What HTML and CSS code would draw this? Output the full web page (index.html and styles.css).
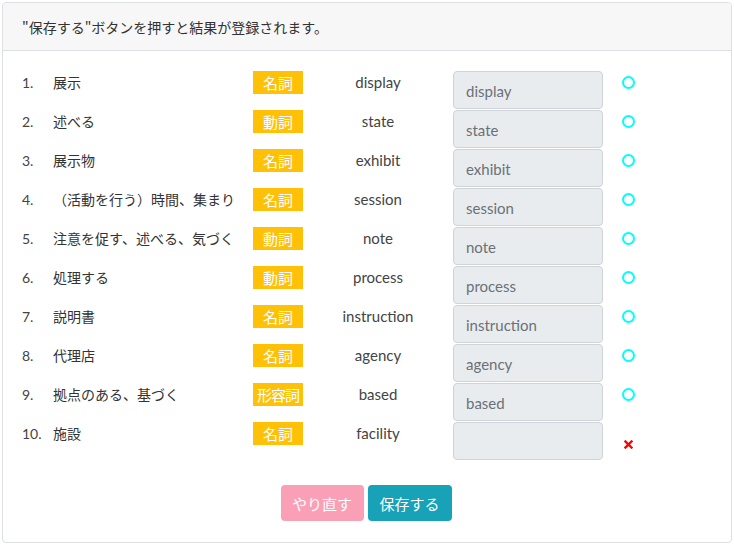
FILE: index.html
```html
<!DOCTYPE html>
<html lang="ja">
<head>
<meta charset="utf-8">
<link rel="stylesheet" href="styles.css">
</head>
<body>
<div class="card">
  <div class="card-header">"保存する"ボタンを押すと結果が登録されます。</div>
  <div class="card-body">
    <div class="rows">
      <div class="row"><span class="num">1.</span><span class="ja">展示</span><span class="badge">名詞</span><span class="en">display</span><input class="field" value="display" readonly><span class="mark"><span class="ring"></span></span></div>
      <div class="row"><span class="num">2.</span><span class="ja">述べる</span><span class="badge">動詞</span><span class="en">state</span><input class="field" value="state" readonly><span class="mark"><span class="ring"></span></span></div>
      <div class="row"><span class="num">3.</span><span class="ja">展示物</span><span class="badge">名詞</span><span class="en">exhibit</span><input class="field" value="exhibit" readonly><span class="mark"><span class="ring"></span></span></div>
      <div class="row"><span class="num">4.</span><span class="ja">（活動を行う）時間、集まり</span><span class="badge">名詞</span><span class="en">session</span><input class="field" value="session" readonly><span class="mark"><span class="ring"></span></span></div>
      <div class="row"><span class="num">5.</span><span class="ja">注意を促す、述べる、気づく</span><span class="badge">動詞</span><span class="en">note</span><input class="field" value="note" readonly><span class="mark"><span class="ring"></span></span></div>
      <div class="row"><span class="num">6.</span><span class="ja">処理する</span><span class="badge">動詞</span><span class="en">process</span><input class="field" value="process" readonly><span class="mark"><span class="ring"></span></span></div>
      <div class="row"><span class="num">7.</span><span class="ja">説明書</span><span class="badge">名詞</span><span class="en">instruction</span><input class="field" value="instruction" readonly><span class="mark"><span class="ring"></span></span></div>
      <div class="row"><span class="num">8.</span><span class="ja">代理店</span><span class="badge">名詞</span><span class="en">agency</span><input class="field" value="agency" readonly><span class="mark"><span class="ring"></span></span></div>
      <div class="row"><span class="num">9.</span><span class="ja">拠点のある、基づく</span><span class="badge badge-narrow">形容詞</span><span class="en">based</span><input class="field" value="based" readonly><span class="mark"><span class="ring"></span></span></div>
      <div class="row"><span class="num">10.</span><span class="ja">施設</span><span class="badge">名詞</span><span class="en">facility</span><input class="field" value="" readonly><span class="mark mark-wrong"><svg width="9" height="9" viewBox="0 0 9 9"><path d="M1.5 1.5L7.5 7.5M7.5 1.5L1.5 7.5" stroke="#ff0000" stroke-width="2.4" stroke-linecap="square"/></svg></span></div>
    </div>
    <div class="actions">
      <button class="btn btn-pink">やり直す</button>
      <button class="btn btn-info">保存する</button>
    </div>
  </div>
</div>
</body>
</html>
```
FILE: styles.css
```css
html, body {
  margin: 0;
  padding: 0;
  background: #ffffff;
}
body {
  padding: 2px;
  font-family: Lato, "Noto Sans CJK JP", sans-serif;
  color: #333333;
}
.card {
  width: 730px;
  height: 541px;
  box-sizing: border-box;
  border: 1px solid #dcdfe3;
  border-radius: 4px;
  display: flex;
  flex-direction: column;
  overflow: hidden;
}
.card-header {
  height: 48px;
  box-sizing: border-box;
  background: #f7f7f7;
  border-bottom: 1px solid #dcdfe3;
  padding: 14px 0 0 19px;
  font-family: "Noto Sans CJK JP", sans-serif;
  font-size: 14px;
  line-height: 20px;
  color: #333333;
}
.card-body {
  padding: 20px 0 0 19px;
}
.rows {
  display: flex;
  flex-direction: column;
  gap: 1px;
}
.row {
  display: grid;
  grid-template-columns: 31px 200px 50px 150px 150px 50px;
  align-items: start;
  height: 38px;
}
.num {
  font-family: Lato, sans-serif;
  font-size: 14px;
  line-height: 23px;
  color: #444444;
}
.ja {
  font-family: "Noto Sans CJK JP", sans-serif;
  font-size: 14px;
  line-height: 23px;
  color: #333333;
  white-space: nowrap;
}
.badge {
  height: 23px;
  background: #ffc107;
  color: #ffffff;
  font-family: "Noto Sans CJK JP", sans-serif;
  font-size: 15px;
  line-height: 23px;
  text-align: center;
}
.badge-narrow {
  letter-spacing: -1px;
}
.en {
  font-family: Lato, sans-serif;
  font-size: 15px;
  line-height: 23px;
  text-align: center;
  color: #444444;
}
.field {
  width: 150px;
  height: 38px;
  box-sizing: border-box;
  margin: 0;
  border: 1px solid #cfd4da;
  border-radius: 4px;
  background: #e9ecef;
  padding: 2px 12px 0 12px;
  font-family: Lato, sans-serif;
  font-size: 15px;
  color: #6b7177;
  outline: none;
}
.mark {
  display: flex;
  justify-content: center;
  align-items: center;
  height: 23px;
}
.ring {
  width: 9px;
  height: 9px;
  border: 2px solid #00ffff;
  border-radius: 50%;
}
.mark-wrong {
  margin-top: 11px;
}
.actions {
  display: flex;
  justify-content: center;
  gap: 4px;
  margin-top: 25px;
  padding-right: 21px;
}
.btn {
  height: 36px;
  border: none;
  border-radius: 4px;
  padding: 0;
  white-space: nowrap;
  font-family: "Noto Sans CJK JP", sans-serif;
  font-size: 15px;
  color: #ffffff;
  cursor: pointer;
}
.btn-pink {
  width: 83px;
  background: #f9a0b7;
}
.btn-info {
  width: 84px;
  background: #17a2b8;
}
```
